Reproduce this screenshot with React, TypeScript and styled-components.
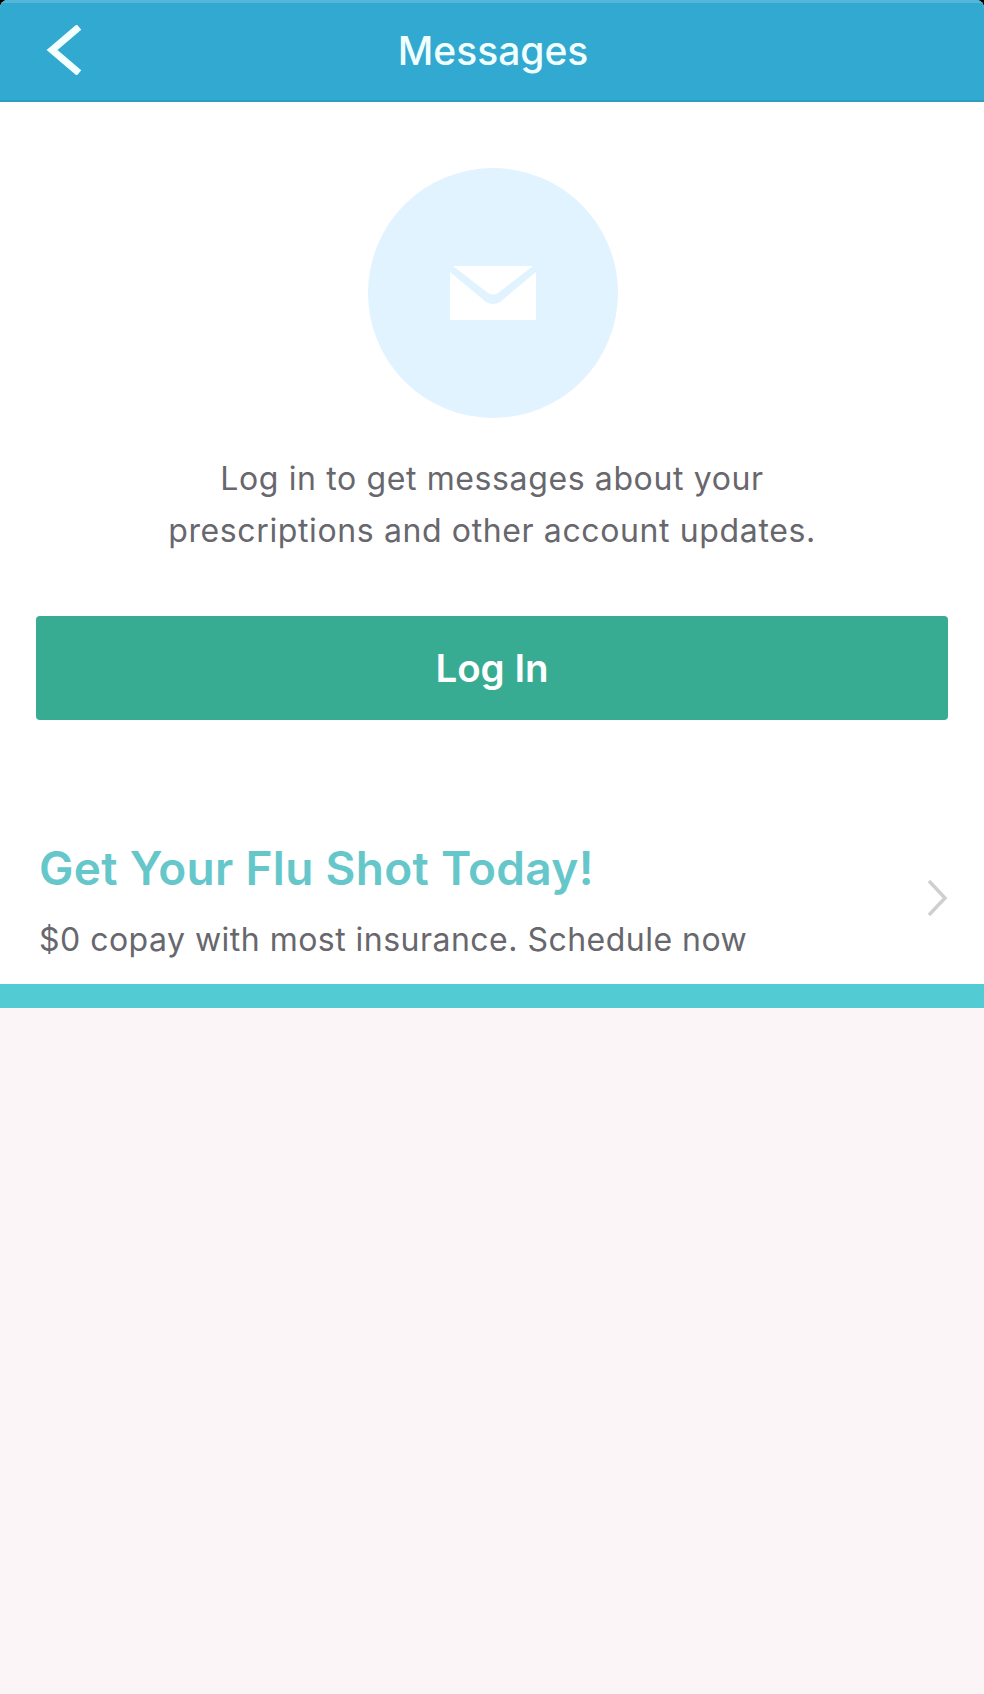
import { createGlobalStyle } from 'styled-components';
import styled from 'styled-components';

const GlobalStyle = createGlobalStyle`
	html, body {
		margin: 0;
		padding: 0;
		background: #000;
	}
	#root {
		width: 984px;
		height: 1694px;
	}
`;

const Screen = styled.div`
	width: 984px;
	height: 1694px;
	display: flex;
	flex-direction: column;
	background: #fff;
	font-family: Inter, 'Liberation Sans', sans-serif;
	overflow: hidden;
	border-radius: 8px 8px 0 0;
`;

const Header = styled.header`
	height: 102px;
	flex: none;
	box-sizing: border-box;
	padding: 0 0 0 2px;
	display: flex;
	align-items: center;
	justify-content: center;
	background: #31a9d0;
	border-top: 3px solid #55b6d7;
	border-bottom: 2px solid #2f9dbf;
	position: relative;
`;

const BackButton = styled.button`
	position: absolute;
	left: 46px;
	top: 47px;
	transform: translateY(-50%);
	padding: 0;
	border: 0;
	background: none;
	display: flex;
`;

const HeaderTitle = styled.h1`
	margin: 0 0 2px;
	font-size: 39px;
	font-weight: 500;
	color: #f2ffff;
`;

const Main = styled.main`
	flex: none;
	height: 882px;
	box-sizing: border-box;
	padding: 66px 36px 0;
	display: flex;
	flex-direction: column;
	align-items: center;
`;

const Circle = styled.div`
	width: 250px;
	height: 250px;
	flex: none;
	margin-left: 1px;
	border-radius: 50%;
	background: #e1f3fe;
	display: flex;
	align-items: center;
	justify-content: center;
`;

const Prompt = styled.p`
	margin: 35px 0 0;
	font-size: 32px;
	line-height: 52px;
	letter-spacing: 0.62px;
	color: #68676d;
	text-align: center;
`;

const LoginButton = styled.button`
	margin-top: 59px;
	width: 100%;
	height: 104px;
	flex: none;
	border: 0;
	border-radius: 4px;
	background: #37ac92;
	color: #fff;
	font: 600 38.5px Inter, 'Liberation Sans', sans-serif;
`;

const Promo = styled.section`
	align-self: stretch;
	margin: 120px -36px 0 0;
	padding-left: 3px;
	padding-right: 36px;
	display: flex;
	align-items: center;
	justify-content: space-between;
`;

const PromoTitle = styled.h2`
	margin: 0;
	font-size: 46px;
	line-height: 56px;
	font-weight: 600;
	letter-spacing: 0.3px;
	color: #66c7cb;
`;

const PromoText = styled.p`
	margin: 24px 0 0;
	font-size: 32px;
	line-height: 40px;
	letter-spacing: 0.48px;
	color: #68676d;
`;

const Chevron = styled.svg`
	flex: none;
	margin-top: -4px;
`;

const TealBar = styled.div`
	height: 24px;
	flex: none;
	background: #52cbd2;
`;

const Empty = styled.div`
	flex: 1;
	background: #fcf5f8;
`;

const App = () => {
	return (
		<Screen>
			<GlobalStyle />
			<Header>
				<BackButton aria-label="Back">
					<svg width="36" height="50" viewBox="0 0 36 50" fill="none">
						<path d="M33 2 L6 25 L33 48" stroke="#f4ffff" strokeWidth="7" />
					</svg>
				</BackButton>
				<HeaderTitle>Messages</HeaderTitle>
			</Header>
			<Main>
				<Circle>
					<svg width="86" height="54" viewBox="0 0 86 54">
						<path d="M3 0 H83 L48 27 Q43 30 38 27 Z" fill="#fff" />
						<path d="M0 6 L36 36 Q43 40 50 36 L86 6 V54 H0 Z" fill="#fff" />
					</svg>
				</Circle>
				<Prompt>
					Log in to get messages about your
					<br />
					prescriptions and other account updates.
				</Prompt>
				<LoginButton>Log In</LoginButton>
				<Promo>
					<div>
						<PromoTitle>Get Your Flu Shot Today!</PromoTitle>
						<PromoText>$0 copay with most insurance. Schedule now</PromoText>
					</div>
					<Chevron width="22" height="36" viewBox="0 0 22 36" fill="none">
						<path d="M3 1 L19 18 L3 35" stroke="#cfcfd1" strokeWidth="3.5" />
					</Chevron>
				</Promo>
			</Main>
			<TealBar />
			<Empty />
		</Screen>
	);
};

export default App;
